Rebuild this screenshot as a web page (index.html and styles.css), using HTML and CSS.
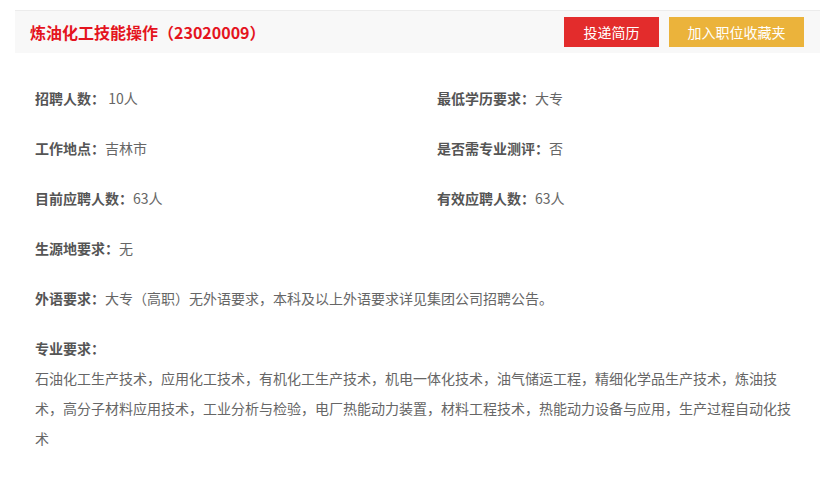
FILE: index.html
```html
<!DOCTYPE html>
<html lang="zh">
<head>
  <meta charset="UTF-8">
  <title>职位详情</title>
  <link rel="stylesheet" href="styles.css">
</head>
<body>
  <div class="job">
    <div class="job-head">
      <h1 class="job-title">炼油化工技能操作（23020009）</h1>
      <div class="job-actions">
        <button class="btn btn-apply">投递简历</button>
        <button class="btn btn-fav">加入职位收藏夹</button>
      </div>
    </div>

    <div class="job-info">
      <div class="info-row"><b>招聘人数：</b> 10人</div>
      <div class="info-row"><b>最低学历要求：</b>大专</div>
      <div class="info-row"><b>工作地点：</b>吉林市</div>
      <div class="info-row"><b>是否需专业测评：</b>否</div>
      <div class="info-row"><b>目前应聘人数：</b>63人</div>
      <div class="info-row"><b>有效应聘人数：</b>63人</div>
      <div class="info-row wide"><b>生源地要求：</b>无</div>
      <div class="info-row wide"><b>外语要求：</b>大专（高职）无外语要求，本科及以上外语要求详见集团公司招聘公告。</div>
    </div>

    <div class="job-major">
      <b>专业要求：</b>
      <p>石油化工生产技术，应用化工技术，有机化工生产技术，机电一体化技术，油气储运工程，精细化学品生产技术，炼油技术，高分子材料应用技术，工业分析与检验，电厂热能动力装置，材料工程技术，热能动力设备与应用，生产过程自动化技术</p>
    </div>
  </div>
</body>
</html>
```

FILE: styles.css
```css
body {
  margin: 0;
  padding: 10px 0 0 15px;
  background: #fff;
  color: #666;
  font-family: "Noto Sans CJK SC", "Noto Sans", sans-serif;
  font-size: 14px;
}
.job { width: 805px; }
.job-head {
  display: flex;
  align-items: center;
  justify-content: space-between;
  height: 42px;
  padding: 0 16px 0 15px;
  background: #f8f8f8;
  border-top: 1px solid #ececec;
}
.job-title {
  margin: 0;
  font-size: 16px;
  font-weight: bold;
  color: #e4141e;
}
.job-actions { display: flex; gap: 10px; }
.btn {
  height: 30px;
  border: none;
  color: #fff;
  font-family: inherit;
  font-size: 14px;
  padding: 0;
  cursor: pointer;
}
.btn-apply { width: 95px; background: #e32c2c; }
.btn-fav { width: 135px; background: #ebb33b; }
.job-info {
  display: grid;
  grid-template-columns: 402px 1fr;
  padding: 20px 20px 0 20px;
}
.info-row { line-height: 50px; white-space: nowrap; }
.info-row.wide { grid-column: 1 / 3; }
.info-row b, .job-major b { color: #555; }
.job-major {
  margin-top: 10px;
  padding: 0 20px;
  line-height: 30px;
}
.job-major p { margin: 0; }
```
